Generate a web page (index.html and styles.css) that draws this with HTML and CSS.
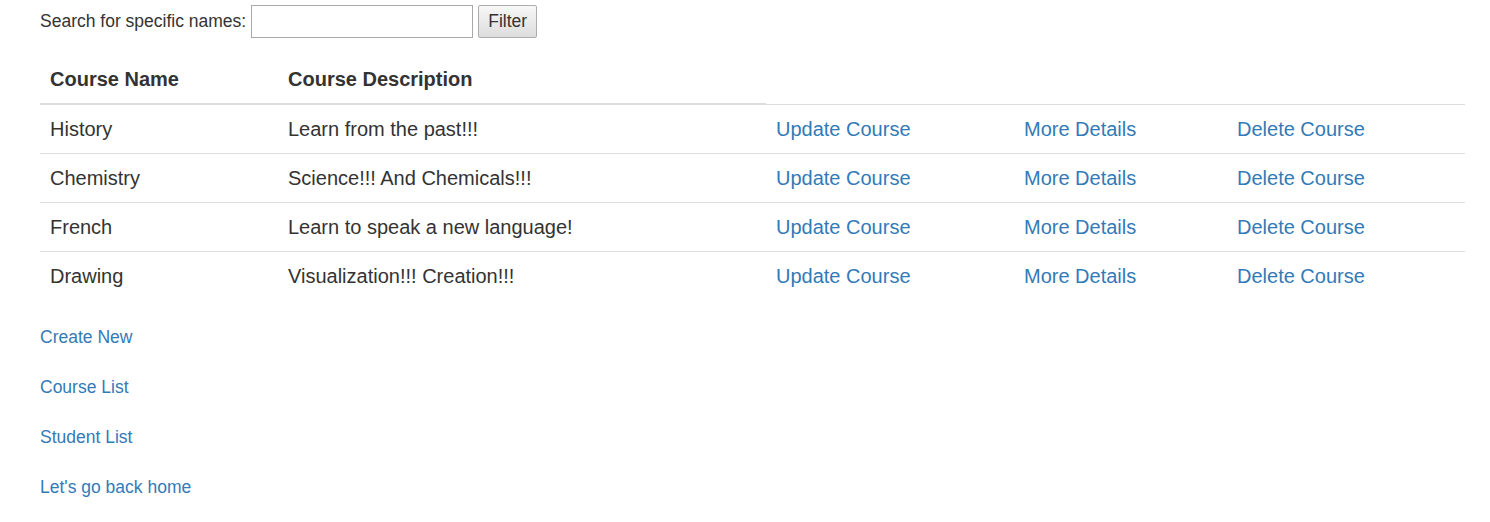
FILE: index.html
```html
<!DOCTYPE html>
<html>
<head>
<meta charset="utf-8">
<link rel="stylesheet" href="styles.css">
</head>
<body>
<div class="page">
  <form class="search">
    <label class="search-label">Search for specific names:</label>
    <input class="search-input" type="text">
    <button class="search-btn" type="button">Filter</button>
  </form>
  <table class="courses">
    <colgroup>
      <col class="c1"><col class="c2"><col class="c3"><col class="c4"><col class="c5">
    </colgroup>
    <thead>
      <tr><th>Course Name</th><th>Course Description</th></tr>
    </thead>
    <tbody>
      <tr><td>History</td><td>Learn from the past!!!</td><td><a href="#">Update Course</a></td><td><a href="#">More Details</a></td><td><a href="#">Delete Course</a></td></tr>
      <tr><td>Chemistry</td><td>Science!!! And Chemicals!!!</td><td><a href="#">Update Course</a></td><td><a href="#">More Details</a></td><td><a href="#">Delete Course</a></td></tr>
      <tr><td>French</td><td>Learn to speak a new language!</td><td><a href="#">Update Course</a></td><td><a href="#">More Details</a></td><td><a href="#">Delete Course</a></td></tr>
      <tr><td>Drawing</td><td>Visualization!!! Creation!!!</td><td><a href="#">Update Course</a></td><td><a href="#">More Details</a></td><td><a href="#">Delete Course</a></td></tr>
    </tbody>
  </table>
  <nav class="links">
    <a href="#">Create New</a>
    <a href="#">Course List</a>
    <a href="#">Student List</a>
    <a href="#">Let's go back home</a>
  </nav>
</div>
</body>
</html>
```
FILE: styles.css
```css
html, body {
  margin: 0;
  padding: 0;
  background: #fff;
}
body {
  font-family: "Liberation Sans", Arial, sans-serif;
  font-size: 17.5px;
  line-height: 25px;
  color: #333;
}
a {
  color: #337ab7;
  text-decoration: none;
}
.page {
  padding: 5px 25px 0 40px;
}
.search {
  display: flex;
  align-items: center;
  height: 32px;
  margin: 0;
}
.search-label {
  margin-right: 5px;
}
.search-input {
  box-sizing: border-box;
  width: 222px;
  height: 33px;
  border: 1px solid #a9a9a9;
  margin: 0 5px 0 0;
  padding: 2px 4px;
  font: inherit;
}
.search-btn {
  box-sizing: border-box;
  width: 59px;
  height: 33px;
  border: 1px solid #adadad;
  border-radius: 2px;
  background: linear-gradient(#f7f7f7, #dddddd);
  font-family: "Liberation Sans", Arial, sans-serif;
  font-size: 17.5px;
  color: #333;
  padding: 0;
}
.courses {
  width: 1425px;
  border-collapse: collapse;
  border-spacing: 0;
  margin-top: 18px;
  font-size: 20px;
  line-height: 28px;
}
.c1 { width: 238px; }
.c2 { width: 488px; }
.c3 { width: 248px; }
.c4 { width: 213px; }
.c5 { width: 238px; }
.courses th {
  text-align: left;
  font-weight: bold;
  padding: 10px;
  border-bottom: 2px solid #ddd;
}
.courses td {
  padding: 10px;
  border-top: 1px solid #ddd;
  vertical-align: top;
}
.links {
  display: flex;
  flex-direction: column;
  align-items: flex-start;
  gap: 25px;
  margin-top: 25px;
}
```
